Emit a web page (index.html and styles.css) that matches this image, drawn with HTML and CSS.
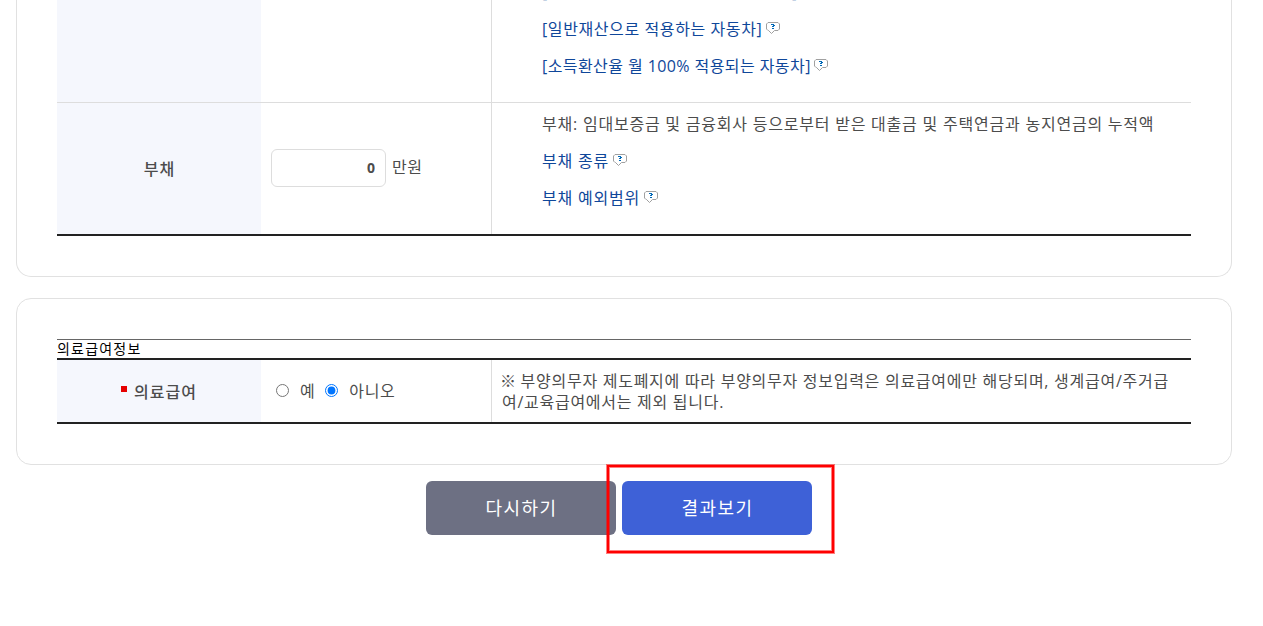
FILE: index.html
```
<!DOCTYPE html>
<html lang="ko">
<head>
  <meta charset="UTF-8" />
  <meta name="viewport" content="width=device-width, initial-scale=1.0" />
  <title>복지서비스 모의계산</title>
  <link rel="stylesheet" href="styles.css">
</head>
<body>
  <!-- 도움말 말풍선 아이콘 -->
  <svg class="symbols" aria-hidden="true">
    <symbol id="help" viewBox="0 0 14 12">
      <path d="M2 .5h10l1.500 1.500v5L12 8.500H8.500l-3 3-3-3H2L.5 7V2z" fill="#fff" stroke="#a0a0a0" />
      <path d="M5 2h3v1h1v1H8v1H6V4h1V3H5zM6 6h2v1H6z" fill="#0068b7" />
    </symbol>
  </svg>

  <section class="box box-property">
    <div class="row row-car">
      <div class="th"></div>
      <div class="td"></div>
      <div class="desc">
        <p><a>[차량가액이 재산에서 제외된 자동차]</a></p>
        <p><a>[일반재산으로 적용하는 자동차]</a><svg class="help"><use href="#help" /></svg></p>
        <p><a class="link-rate">[소득환산율 월 100% 적용되는 자동차]</a><svg class="help"><use href="#help" /></svg></p>
      </div>
    </div>
    <div class="row row-debt">
      <div class="th">부채</div>
      <div class="td">
        <input class="amount" type="text" value="0" aria-label="부채" />
        <span class="unit">만원</span>
      </div>
      <div class="desc">
        <p>부채: 임대보증금 및 금융회사 등으로부터 받은 대출금 및 주택연금과 농지연금의 누적액</p>
        <p><a>부채 종류</a><svg class="help"><use href="#help" /></svg></p>
        <p><a>부채 예외범위</a><svg class="help"><use href="#help" /></svg></p>
      </div>
    </div>
  </section>

  <section class="box box-medical">
    <div class="caption">의료급여정보</div>
    <div class="row row-medical">
      <div class="th"><span class="required"></span>의료급여</div>
      <div class="td">
        <label><input type="radio" name="medical" /><span>예</span></label>
        <label><input type="radio" name="medical" checked /><span>아니오</span></label>
      </div>
      <div class="note">
        <div><span class="mark">※</span> 부양의무자 제도폐지에 따라 부양의무자 정보입력은 의료급여에만 해당되며, 생계급여/주거급</div>
        <div class="note-second">여/교육급여에서는 제외 됩니다.</div>
      </div>
    </div>
  </section>

  <div class="buttons">
    <button class="btn btn-reset" type="button">다시하기</button>
    <button class="btn btn-result" type="button">결과보기</button>
  </div>
  <div class="highlight"></div>
</body>
</html>
```

FILE: styles.css
```
* {
  box-sizing: border-box;
}

body {
  font-family: 'Open Sans', 'Noto Sans CJK KR', sans-serif;
  font-size: 16px;
  letter-spacing: 0.6px;
  margin: 0;
  height: 626px;
  background: #fff;
  color: #4c4c4c;
  position: relative;
  overflow: hidden;
}

p {
  margin: 0;
}

.symbols {
  display: none;
}

.box {
  width: 1216px;
  margin-left: 16px;
  border: 1px solid #e1e1e1;
  border-radius: 15px;
  padding: 40px;
}

.box-property {
  height: 277px;
  border-top: 0;
  border-top-left-radius: 0;
  border-top-right-radius: 0;
  padding-top: 0;
}

.row {
  display: grid;
  grid-template-columns: 204px 230px 700px;
  grid-template-rows: 100%;
}

.th {
  display: flex;
  align-items: center;
  justify-content: center;
  background: #f5f7fd;
  font-weight: 500;
  letter-spacing: 1px;
  padding: 0 0 2px 1px;
}

.td {
  display: flex;
  align-items: center;
  padding: 0 0 2px 10px;
}

.desc {
  border-left: 1px solid #ddd;
  padding-left: 50px;
}

.desc p {
  display: flex;
  align-items: center;
  height: 37px;
  white-space: nowrap;
}

.desc a {
  color: #0f479a;
}

.row-car {
  height: 103px;
  border-bottom: 1px solid #ddd;
  overflow: hidden;
}

.row-car .desc {
  display: flex;
  flex-direction: column;
  justify-content: flex-end;
  padding-bottom: 19px;
}

.row-car .desc p {
  flex-shrink: 0;
}

.link-rate {
  letter-spacing: 0.42px;
}

.row-debt {
  height: 133px;
  border-bottom: 2px solid #222;
}

.row-debt .desc {
  padding-top: 1px;
  letter-spacing: 0.78px;
}

.help {
  width: 14px;
  height: 12px;
  margin: 1px 0 0 4px;
}

.link-rate + .help {
  margin-left: 3px;
}

.amount {
  width: 115px;
  height: 38px;
  border: 1px solid #ddd;
  border-radius: 6px;
  padding: 0 10px;
  font: bold 14px 'Open Sans', 'Noto Sans CJK KR', sans-serif;
  color: #4c4c4c;
  text-align: right;
}

.unit {
  margin: -4px 0 0 6px;
}

.box-medical {
  height: 167px;
  margin-top: 21px;
}

.caption {
  height: 19px;
  border-top: 1px solid #666;
  font-size: 14px;
  line-height: 17px;
  letter-spacing: 1.2px;
  color: #000;
}

.row-medical {
  height: 66px;
  border-top: 2px solid #222;
  border-bottom: 2px solid #222;
}

.row-medical .th {
  padding: 0;
}

.required {
  width: 6px;
  height: 6px;
  margin: -4px 7px 0 0;
  background: #e60000;
}

.row-medical .td {
  padding-left: 15px;
}

label {
  display: flex;
  align-items: center;
  margin-right: 10px;
}

label input {
  width: 13px;
  height: 13px;
  margin: 0 11px 0 0;
}

.note {
  border-left: 1px solid #ddd;
  padding: 11px 0 0 9px;
  line-height: 21px;
  letter-spacing: 0.73px;
  white-space: nowrap;
}

.mark {
  margin: 0 -1px 0 -1px;
}

.note-second {
  padding-left: 1px;
}

.buttons {
  display: flex;
  justify-content: center;
  gap: 6px;
  margin: 16px 25px 0 0;
}

.btn {
  width: 190px;
  height: 54px;
  border: 0;
  border-radius: 6px;
  padding: 0 0 2px 1px;
  font: 18px 'Open Sans', 'Noto Sans CJK KR', sans-serif;
  letter-spacing: 1.4px;
  color: #fff;
}

.btn-reset {
  background: #6d7083;
}

.btn-result {
  background: #3e61d7;
}

/* 결과보기 버튼 강조 표시 */
.highlight {
  position: absolute;
  left: 607px;
  top: 465px;
  width: 227px;
  height: 88px;
  border: 2px solid #f00;
  box-shadow: 0 0 0 1px rgba(255, 0, 0, 0.5), inset 0 0 0 1px rgba(255, 0, 0, 0.5);
}
```
